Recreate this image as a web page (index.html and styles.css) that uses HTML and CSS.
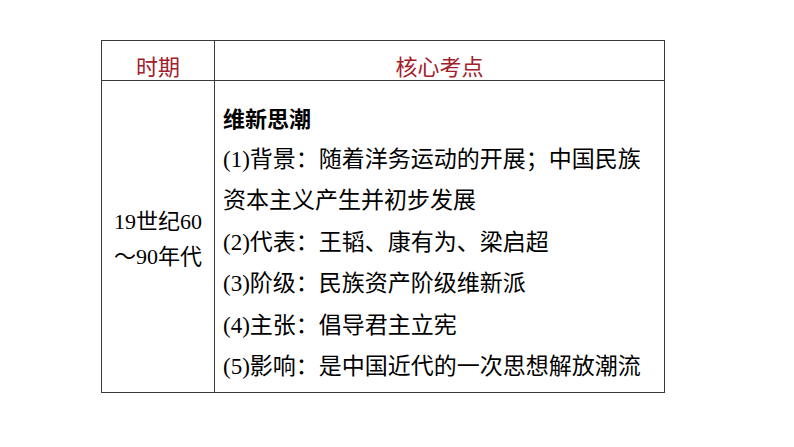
FILE: index.html
```html
<!DOCTYPE html>
<html lang="zh-CN">
<head>
<meta charset="utf-8">
<title>维新思潮</title>
<link rel="stylesheet" href="styles.css">
</head>
<body>
<div class="page">
  <table class="summary">
    <colgroup>
      <col class="col-period">
      <col class="col-points">
    </colgroup>
    <thead>
      <tr>
        <th class="head">时期</th>
        <th class="head">核心考点</th>
      </tr>
    </thead>
    <tbody>
      <tr>
        <td class="period">19世纪60<br>～90年代</td>
        <td class="points">
          <p class="title">维新思潮</p>
          <p>(1)背景：随着洋务运动的开展；中国民族资本主义产生并初步发展</p>
          <p>(2)代表：王韬、康有为、梁启超</p>
          <p>(3)阶级：民族资产阶级维新派</p>
          <p>(4)主张：倡导君主立宪</p>
          <p>(5)影响：是中国近代的一次思想解放潮流</p>
        </td>
      </tr>
    </tbody>
  </table>
</div>
</body>
</html>
```

FILE: styles.css
```css
html, body {
  margin: 0;
  padding: 0;
  background: #ffffff;
}

.page {
  padding: 40px 0 0 101px;
  font-family: "Liberation Serif", "Noto Sans CJK SC", serif;
  color: #000000;
}

.summary {
  border-collapse: collapse;
  table-layout: fixed;
  width: 563px;
}

.col-period { width: 113px; }
.col-points { width: 450px; }

.summary th,
.summary td {
  border: 1px solid #3a3a3a;
  padding: 0;
}

.summary .head {
  height: 40px;
  box-sizing: border-box;
  padding: 0 0 3px 0;
  vertical-align: bottom;
  font-family: "Noto Sans CJK SC", sans-serif;
  font-weight: 400;
  font-size: 22px;
  line-height: 24px;
  color: #a2202a;
  text-align: center;
}

.summary .period {
  vertical-align: middle;
  text-align: center;
  font-size: 22px;
  line-height: 35px;
  padding: 6px 0 0 0;
}

.summary .points {
  padding: 16px 12px 4px 8px;
  font-size: 23px;
  line-height: 41.5px;
  vertical-align: top;
}

.points p {
  margin: 0;
}

.points .title {
  font-family: "Noto Sans CJK SC", sans-serif;
  font-weight: 700;
  font-size: 22px;
}
```
